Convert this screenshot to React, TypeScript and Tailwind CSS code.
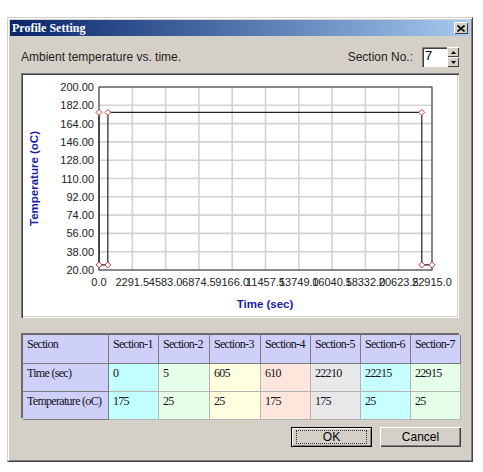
import React from "react";

type Section = { time: number; temp: number; bg: string };

const SECTIONS: Section[] = [
  { time: 0, temp: 175, bg: "bg-[#c4ffff]" },
  { time: 5, temp: 25, bg: "bg-[#e6ffe8]" },
  { time: 605, temp: 25, bg: "bg-[#ffffe0]" },
  { time: 610, temp: 175, bg: "bg-[#ffe6dc]" },
  { time: 22210, temp: 175, bg: "bg-[#e8e8e8]" },
  { time: 22215, temp: 25, bg: "bg-[#c8ffff]" },
  { time: 22915, temp: 25, bg: "bg-[#e6ffe8]" },
];

// plot box inside the chart panel
const X0 = 78;
const X1 = 411;
const Y0 = 14;
const Y1 = 197;
const T_MAX = 22915;
const V_MIN = 20;
const V_MAX = 200;

const xAt = (t: number) => X0 + (t / T_MAX) * (X1 - X0);
const yAt = (v: number) => Y0 + ((V_MAX - v) / (V_MAX - V_MIN)) * (Y1 - Y0);

const Y_LABELS = Array.from({ length: 11 }, (_, i) => V_MAX - i * 18);
const X_LABELS = Array.from({ length: 11 }, (_, i) => i * (T_MAX / 10));

function Chart() {
  const pts = SECTIONS.map((s) => [xAt(s.time), yAt(s.temp)] as const);
  const line = pts.map(([x, y], i) => `${i ? "L" : "M"}${x.toFixed(1)},${y.toFixed(1)}`).join(" ");

  return (
    <svg width={438} height={245} className="block" style={{ fontFamily: '"Liberation Sans", Arial, sans-serif' }}>
      {Y_LABELS.map((v, i) => {
        const y = Y0 + (i * (Y1 - Y0)) / 10;
        return (
          <g key={v}>
            <line x1={X0} x2={X1} y1={y} y2={y} stroke="#d2d2d2" strokeWidth={1.6} />
            <text x={73} y={y + 4} fontSize={11} textAnchor="end" fill="#222">
              {v.toFixed(2)}
            </text>
          </g>
        );
      })}
      {X_LABELS.map((t, i) => {
        const x = X0 + (i * (X1 - X0)) / 10;
        return (
          <g key={i}>
            <line x1={x} x2={x} y1={Y0} y2={Y1} stroke="#d2d2d2" strokeWidth={1.6} />
            <text x={x} y={213} fontSize={11} textAnchor="middle" fill="#222">
              {t.toFixed(1)}
            </text>
          </g>
        );
      })}
      <rect x={X0} y={Y0} width={X1 - X0} height={Y1 - Y0} fill="none" stroke="#333" strokeWidth={1} />
      <path d={line} fill="none" stroke="#222" strokeWidth={1.2} />
      {pts.map(([x, y], i) => (
        <path
          key={i}
          d={`M${x - 3},${y} L${x},${y - 3} L${x + 3},${y} L${x},${y + 3} Z`}
          fill="#fff"
          stroke="#c83a4a"
          strokeWidth={1}
        />
      ))}
      <text x={244} y={235} fontSize={11.5} fontWeight="bold" textAnchor="middle" fill="#1a1aa8">
        Time (sec)
      </text>
      <text
        transform="translate(17,105.5) rotate(-90)"
        fontSize={11.5}
        fontWeight="bold"
        textAnchor="middle"
        fill="#1a1aa8"
      >
        Temperature (oC)
      </text>
    </svg>
  );
}

function SpinBox() {
  return (
    <div className="flex h-[20px]">
      <div className="w-[25px] bg-white pl-[3px] text-[13px] leading-[18px] text-black shadow-[inset_1px_1px_0_#808080,inset_2px_2px_0_#404040,inset_-1px_-1px_0_#fff]">
        7
      </div>
      <div className="flex w-[12px] flex-col">
        {[0, 1].map((i) => (
          <div
            key={i}
            className="flex h-[10px] items-center justify-center bg-[#d4d0c8] shadow-[inset_1px_1px_0_#fff,inset_-1px_-1px_0_#404040]"
          >
            <svg width={5} height={3} viewBox="0 0 5 3">
              <path d={i === 0 ? "M0,3 L2.5,0 L5,3 Z" : "M0,0 L2.5,3 L5,0 Z"} fill="#000" />
            </svg>
          </div>
        ))}
      </div>
    </div>
  );
}

function Table() {
  const head = "overflow-hidden whitespace-nowrap border-r border-b border-[#7c7c7c] bg-[#cfd0fa] pl-[4px] pt-[2px]";
  const cell = "overflow-hidden whitespace-nowrap border-r border-b border-[#b4b4b4] pl-[4px] pt-[2px]";
  return (
    <div
      className="grid h-[85px] grid-cols-[86px_50px_51px_51px_50px_50px_50px_50px] grid-rows-[29px_28px_28px] border-t-2 border-l-2 border-t-[#6c6c6c] border-l-[#6c6c6c] text-[12px] leading-[14px] tracking-[-0.7px] text-[#101020]"
      style={{ fontFamily: '"Liberation Serif", "Times New Roman", serif' }}
    >
      <div className={head}>Section</div>
      {SECTIONS.map((_, i) => (
        <div key={i} className={`${head} pl-[3px]`}>
          Section-{i + 1}
        </div>
      ))}
      <div className={head}>Time (sec)</div>
      {SECTIONS.map((s, i) => (
        <div key={i} className={`${cell} ${s.bg}`}>
          {s.time}
        </div>
      ))}
      <div className={head}>Temperature (oC)</div>
      {SECTIONS.map((s, i) => (
        <div key={i} className={`${cell} ${s.bg}`}>
          {s.temp}
        </div>
      ))}
    </div>
  );
}

export default function App() {
  return (
    <div
      className="h-[472px] w-[483px] overflow-hidden bg-white pt-[17px] pl-[7px]"
      style={{ fontFamily: '"Liberation Sans", Arial, sans-serif' }}
    >
      <div className="flex h-[445px] w-[466px] flex-col border border-t-[#d4d0c8] border-l-[#d4d0c8] border-r-[#404040] border-b-[#404040] bg-[#d4d0c8] p-[2px] shadow-[inset_1px_1px_0_#fff,inset_-1px_-1px_0_#808080]">
        {/* caption bar */}
        <div className="flex h-[16px] items-center justify-between bg-gradient-to-r from-[#0a246a] to-[#a6caf0] pl-[2px] pr-[2px]">
          <span
            className="text-[12px] font-bold leading-none text-white"
            style={{ fontFamily: '"Liberation Serif", "Times New Roman", serif' }}
          >
            Profile Setting
          </span>
          <div className="flex h-[12px] w-[14px] items-center justify-center bg-[#d4d0c8] shadow-[inset_1px_1px_0_#fff,inset_-1px_-1px_0_#404040]">
            <svg width={8} height={7} viewBox="0 0 8 7">
              <path d="M0.5,0.5 L7.5,6.5 M7.5,0.5 L0.5,6.5" stroke="#000" strokeWidth={1.6} />
            </svg>
          </div>
        </div>

        <div className="flex flex-col px-[11px] pt-[11px]">
          <div className="flex h-[20px] items-center justify-between text-[12px] text-[#1e1e1e]">
            <span>Ambient temperature vs. time.</span>
            <div className="flex items-center gap-[9px]">
              <span>Section No.:</span>
              <SpinBox />
            </div>
          </div>

          <div className="mt-[6px] h-[245px] w-[438px] bg-white shadow-[inset_1px_1px_0_#808080,inset_2px_2px_0_#404040,inset_-1px_-1px_0_#fff,inset_-2px_-2px_0_#d4d0c8]">
            <Chart />
          </div>

          <div className="mt-[15px]">
            <Table />
          </div>

          <div className="-mr-[2px] mt-[9px] flex justify-end gap-[8px] text-[12px] text-black">
            <button
              type="button"
              className="flex h-[20px] w-[81px] items-center justify-center border border-black bg-[#d4d0c8] shadow-[inset_1px_1px_0_#fff,inset_-1px_-1px_0_#808080]"
            >
              <span className="flex h-[14px] w-[71px] items-center justify-center border border-dotted border-[#333]">OK</span>
            </button>
            <button
              type="button"
              className="flex h-[20px] w-[81px] items-center justify-center bg-[#d4d0c8] shadow-[inset_1px_1px_0_#fff,inset_-1px_-1px_0_#404040,inset_-2px_-2px_0_#808080]"
            >
              Cancel
            </button>
          </div>
        </div>
      </div>
    </div>
  );
}
